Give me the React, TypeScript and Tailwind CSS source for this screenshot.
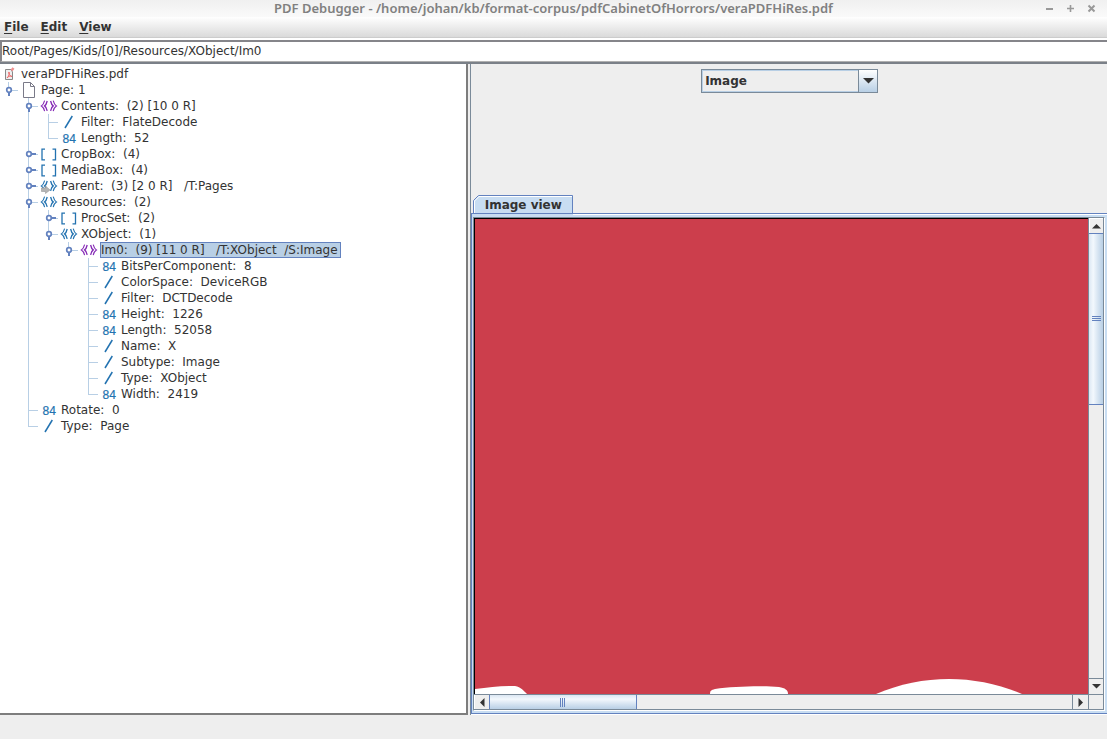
import React from "react";

type Kind = "pdf" | "page" | "stream" | "dict" | "ref" | "array" | "name" | "number";

interface TreeRow {
  level: number;
  kind: Kind;
  label: string;
  handle?: "open" | "closed";
  last?: boolean;
  selected?: boolean;
}

const rows: TreeRow[] = [
  { level: 0, kind: "pdf", label: "veraPDFHiRes.pdf" },
  { level: 1, kind: "page", label: "Page: 1", handle: "open", last: true },
  { level: 2, kind: "stream", label: "Contents:  (2) [10 0 R]", handle: "open" },
  { level: 3, kind: "name", label: "Filter:  FlateDecode" },
  { level: 3, kind: "number", label: "Length:  52", last: true },
  { level: 2, kind: "array", label: "CropBox:  (4)", handle: "closed" },
  { level: 2, kind: "array", label: "MediaBox:  (4)", handle: "closed" },
  { level: 2, kind: "ref", label: "Parent:  (3) [2 0 R]   /T:Pages", handle: "closed" },
  { level: 2, kind: "dict", label: "Resources:  (2)", handle: "open" },
  { level: 3, kind: "array", label: "ProcSet:  (2)", handle: "closed" },
  { level: 3, kind: "dict", label: "XObject:  (1)", handle: "open", last: true },
  { level: 4, kind: "stream", label: "Im0:  (9) [11 0 R]   /T:XObject  /S:Image", handle: "open", last: true, selected: true },
  { level: 5, kind: "number", label: "BitsPerComponent:  8" },
  { level: 5, kind: "name", label: "ColorSpace:  DeviceRGB" },
  { level: 5, kind: "name", label: "Filter:  DCTDecode" },
  { level: 5, kind: "number", label: "Height:  1226" },
  { level: 5, kind: "number", label: "Length:  52058" },
  { level: 5, kind: "name", label: "Name:  X" },
  { level: 5, kind: "name", label: "Subtype:  Image" },
  { level: 5, kind: "name", label: "Type:  XObject" },
  { level: 5, kind: "number", label: "Width:  2419", last: true },
  { level: 2, kind: "number", label: "Rotate:  0" },
  { level: 2, kind: "name", label: "Type:  Page", last: true },
];

/* Whether the branch line of an outer level passes through a given row. */
function lineContinues(index: number, level: number): boolean {
  for (let i = index + 1; i < rows.length; i++) {
    if (rows[i].level < level) return false;
    if (rows[i].level === level) return true;
  }
  return false;
}

function Gutter({ index }: { index: number }) {
  const { level, handle, last } = rows[index];
  if (level === 0) return null;
  const x = 20 * level - 12;
  const outer: number[] = [];
  for (let l = 2; l < level; l++) if (lineContinues(index, l)) outer.push(20 * l - 12);
  return (
    <svg width={20 * level} height={16} aria-hidden="true" className="block shrink-0">
      <g fill="#b8cfe5">
        {outer.map((ox) => (
          <rect key={ox} x={ox} y={0} width={1} height={16} />
        ))}
        <rect x={x} y={0} width={1} height={last ? 9 : 16} />
        <rect x={x} y={8} width={10} height={1} />
      </g>
      {handle && (
        <g stroke="#6382bf" fill="none">
          {handle === "open" ? (
            <path d={`M${x + 1} 10V14`} strokeWidth={2} />
          ) : (
            <path d={`M${x + 3} 8H${x + 8}`} strokeWidth={2} />
          )}
          <circle cx={x + 1} cy={8} r={2.3} strokeWidth={1.7} fill="#fff" />
        </g>
      )}
    </svg>
  );
}

function NodeIcon({ kind }: { kind: Kind }) {
  const blue = "#2272b0";
  const angle = (c: string) => (
    <g stroke={c} fill="none">
      <path
        d="M4.600 2.700C4 5 3 7 1.400 7.900C3 8.800 4 10.800 4.600 13.100M13.200 2.700C13.800 5 14.800 7 16.400 7.900C14.800 8.800 13.800 10.800 13.200 13.100"
        strokeWidth="1.100"
      />
      <path
        d="M7.200 3C6.700 5.200 5.900 7 4.600 7.900C5.900 8.800 6.700 10.600 7.200 12.800M10.600 3C11.100 5.200 11.900 7 13.200 7.900C11.900 8.800 11.100 10.600 10.600 12.800"
        strokeWidth="1.300"
      />
    </g>
  );
  return (
    <svg width={20} height={16} viewBox="0 0 20 16" aria-hidden="true" className="block shrink-0">
      {kind === "pdf" && (
        <g fill="none">
          <path d="M5.500 3.500H11L12.500 6V13.500H5.500Z" fill="#eee" stroke="#888" />
          <path d="M7 12C9 10 10 7 9 6C8 6 9 10 12 10.500C10 9.500 8 10.500 7 12" stroke="#ee6a6a" />
          <path d="M11.500 4.500L13.500 2" stroke="#f09090" strokeWidth="2.500" />
        </g>
      )}
      {kind === "page" && (
        <path d="M3.500 .5H10.500L14.500 4.500V15.500H3.500ZM10.500 .5V4.500H14.500" fill="#fff" stroke="#7a7a88" />
      )}
      {kind === "stream" && angle("#8427b5")}
      {kind === "dict" && angle(blue)}
      {kind === "ref" && (
        <>
          {angle(blue)}
          <path d="M1.500 10H5.500V8L10 12L5.500 15.500V13.500H1.500Z" fill="#b4b4b4" stroke="#999" strokeWidth=".6" />
        </>
      )}
      {kind === "array" && (
        <path d="M5 3.200H2V13.800H5M12.500 3.200H15.500V13.800H12.500" fill="none" stroke={blue} strokeWidth="1.300" />
      )}
      {kind === "name" && <path d="M5 14L12.300 2" stroke={blue} strokeWidth="1.500" />}
      {kind === "number" && (
        <text x="2.500" y="12.500" fontSize="12" fill={blue} stroke={blue} strokeWidth=".2" fontFamily="'Liberation Sans', sans-serif">
          84
        </text>
      )}
    </svg>
  );
}

function Tree() {
  return (
    <ul role="tree" aria-label="Document structure" className="pt-0.5">
      {rows.map((row, i) => (
        <li key={i} role="treeitem" aria-level={row.level + 1} aria-selected={!!row.selected} className="flex h-4 items-center">
          <Gutter index={i} />
          <NodeIcon kind={row.kind} />
          <span
            className={
              row.selected
                ? "whitespace-pre border border-[#6382bf] bg-[#b8cfe5] pr-0.5 leading-[14px]"
                : "whitespace-pre pl-px leading-4"
            }
          >
            {row.label}
          </span>
        </li>
      ))}
    </ul>
  );
}

function Arrow({ dir }: { dir: "up" | "down" | "left" | "right" }) {
  const paths = {
    up: "M0 6.500L4.500 2L9 6.500Z",
    down: "M0 2L4.500 6.500L9 2Z",
    left: "M6.500 0L2 4.500L6.500 9Z",
    right: "M2.500 0L7 4.500L2.500 9Z",
  };
  return (
    <svg width={9} height={9} aria-hidden="true">
      <path d={paths[dir]} fill="#333" />
    </svg>
  );
}

function VerticalScrollbar() {
  return (
    <div className="flex w-4 shrink-0 flex-col border-x border-[#7a8a99] bg-[#eee]">
      <button type="button" aria-label="Scroll up" className="flex h-[15px] items-center justify-center border-t border-l border-white">
        <Arrow dir="up" />
      </button>
      <div className="flex min-h-0 flex-1 flex-col">
        <div className="flex h-[38.6%] flex-col items-center justify-center gap-px border-y border-[#6382bf] bg-linear-to-r from-[#dbe7f3] via-[#f3f8fd] via-30% to-[#b8cfe5]">
          <span className="h-px w-[9px] bg-[#6382bf]" />
          <span className="h-px w-[9px] bg-[#6382bf]" />
          <span className="h-px w-[9px] bg-[#6382bf]" />
        </div>
      </div>
      <button type="button" aria-label="Scroll down" className="flex h-4 items-center justify-center border-t border-[#7a8a99]">
        <Arrow dir="down" />
      </button>
    </div>
  );
}

function HorizontalScrollbar() {
  return (
    <div className="flex h-4 shrink-0 border-y border-[#7a8a99] bg-[#eee]">
      <button type="button" aria-label="Scroll left" className="flex w-[15px] items-center justify-center border-l border-white">
        <Arrow dir="left" />
      </button>
      <div className="flex min-w-0 flex-1">
        <div className="flex w-[25.3%] items-center justify-center gap-px border-x border-[#6382bf] bg-linear-to-b from-[#dbe7f3] via-[#f3f8fd] via-30% to-[#b8cfe5]">
          <span className="h-[9px] w-px bg-[#6382bf]" />
          <span className="h-[9px] w-px bg-[#6382bf]" />
          <span className="h-[9px] w-px bg-[#6382bf]" />
        </div>
      </div>
      <button type="button" aria-label="Scroll right" className="flex w-4 items-center justify-center border-l border-[#7a8a99]">
        <Arrow dir="right" />
      </button>
      <div className="w-4 border-x border-[#7a8a99]" />
    </div>
  );
}

export default function App() {
  return (
    <div className="flex h-screen flex-col bg-[#eee] font-['DejaVu_Sans',sans-serif] text-[12px] text-[#333]">
      <header className="flex h-[17px] shrink-0 items-start bg-linear-to-b from-[#f0f0f0] to-[#fafafa] text-[#808080]">
        <div className="w-16" />
        <h1 className="flex-1 text-center font-['Noto_Sans',sans-serif] text-[13px] leading-4 font-semibold">
          PDF Debugger - /home/johan/kb/format-corpus/pdfCabinetOfHorrors/veraPDFHiRes.pdf
        </h1>
        <div className="flex h-4 w-16 items-center gap-3 pl-0.5">
          <button type="button" aria-label="Minimize">
            <svg width={9} height={9} className="block"><path d="M1 5H8" stroke="#999" strokeWidth="2" /></svg>
          </button>
          <button type="button" aria-label="Maximize">
            <svg width={9} height={9} className="block"><path d="M1 4.500H8M4.500 1V8" stroke="#999" strokeWidth="1.600" /></svg>
          </button>
          <button type="button" aria-label="Close">
            <svg width={9} height={9} className="block"><path d="M1.500 1.500L7.500 7.500M7.500 1.500L1.500 7.500" stroke="#999" strokeWidth="2" /></svg>
          </button>
        </div>
      </header>

      <nav aria-label="Main menu" className="flex h-[21px] shrink-0 items-center gap-3 border-b border-[#ccc] bg-linear-to-b from-white to-[#dadada] px-1 leading-5 font-bold">
        <button type="button"><span className="underline underline-offset-2">F</span>ile</button>
        <button type="button"><span className="underline underline-offset-2">E</span>dit</button>
        <button type="button"><span className="underline underline-offset-2">V</span>iew</button>
      </nav>

      <div className="shrink-0 bg-white pt-0.5">
        <input
          aria-label="Tree path"
          defaultValue="Root/Pages/Kids/[0]/Resources/XObject/Im0"
          className="block h-[22px] w-full border-t-2 border-b border-l-2 border-t-[#85858a] border-b-[#b0b0b0] border-l-[#85858a] bg-white pb-px leading-4 outline-none"
        />
      </div>

      <main className="flex min-h-0 flex-1 border-t-2 border-[#7a8088]">
        <section className="w-[42.3%] shrink-0 overflow-hidden border-r-2 border-b-2 border-[#7d7d7d] bg-white">
          <Tree />
        </section>
        <section className="ml-0.5 flex min-w-0 flex-1 flex-col border-l border-[#7a8a99]">
          <div className="flex h-[131px] shrink-0 justify-center pt-[5px] pl-px">
            <div className="grid h-6 w-[177px] border border-[#7a8a99]">
              <select
                aria-label="View"
                defaultValue="Image"
                className="col-start-1 row-start-1 w-full appearance-none border border-[#b8cfe5] bg-[#eee] pl-0.5 font-bold outline-none"
              >
                <option>Image</option>
              </select>
              <span className="pointer-events-none col-start-1 row-start-1 flex w-[19px] items-center justify-center justify-self-end border-l border-[#7a8a99] bg-linear-to-b from-white to-[#b8cfe5]">
                <svg width={11} height={6} aria-hidden="true"><path d="M0 0H11L5.500 5.500Z" fill="#333" /></svg>
              </span>
            </div>
          </div>

          <div role="tablist" className="flex h-[18px] shrink-0 pl-0.5">
            <button type="button" role="tab" aria-selected="true" className="grid w-[100px] items-center">
              <svg width="100%" height={18} viewBox="0 0 100 18" aria-hidden="true" className="col-start-1 row-start-1 block">
                <path d="M.5 18V5.500L5.500 .5H99.500V18" fill="#c8ddf2" stroke="#6382bf" />
                <path d="M1.500 18V6L6 1.500H99" fill="none" stroke="#fff" />
              </svg>
              <span className="col-start-1 row-start-1 pt-0.5 leading-4 font-bold">Image view</span>
            </button>
          </div>

          <div className="flex min-h-0 flex-1 flex-col border-t border-b border-l border-[#6382bf] bg-[#c8ddf2] pr-0.5 pb-0.5">
            <div className="-mr-0.5 ml-[101px] h-px shrink-0 bg-white" />
            <div className="mt-0.5 ml-px flex min-h-0 flex-1 flex-col border border-t-[#7a8a99] border-r-white border-b-white border-l-[#7a8a99]">
              <div className="flex min-h-0 flex-1">
                <div role="img" aria-label="Image preview" className="flex min-w-0 flex-1 items-end overflow-hidden border-t border-l border-black bg-[#cc3e4c]">
                  <svg width={613} height={17} viewBox="0 0 613 17" className="block shrink-0">
                    <g fill="#fff">
                      <path d="M0 12C14 10 26 8.500 40 9C46 10 49 14 52 17H0Z" />
                      <path d="M235 17C235 14 236 13 240 12C258 9.500 286 8.500 304 10C310 11 313 13 313 17Z" />
                      <path d="M401 17C448 -3 500 -3 547 17Z" />
                    </g>
                  </svg>
                </div>
                <VerticalScrollbar />
              </div>
              <HorizontalScrollbar />
            </div>
          </div>
          <div className="h-px shrink-0 bg-white" />
        </section>
      </main>

      <footer className="h-6 shrink-0 bg-[#eee]" />
    </div>
  );
}
